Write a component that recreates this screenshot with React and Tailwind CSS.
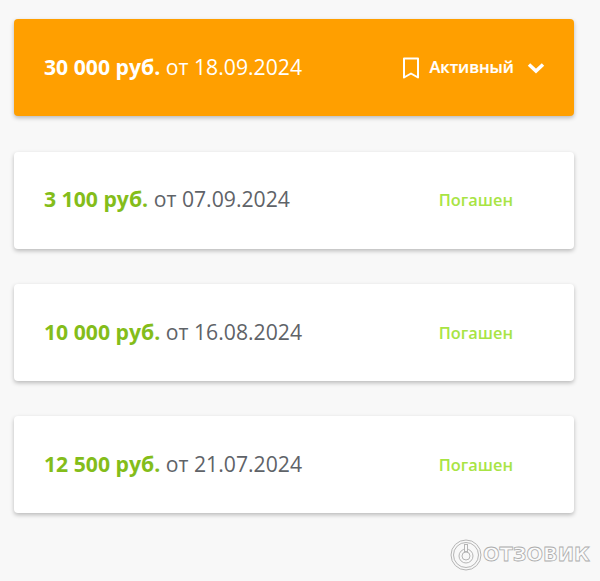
import React from "react";

const loans = [
    { amount: "3 100 руб.", date: "от 07.09.2024", statusClass: "translate-y-0" },
    { amount: "10 000 руб.", date: "от 16.08.2024", statusClass: "translate-y-[1px]" },
    { amount: "12 500 руб.", date: "от 21.07.2024", statusClass: "translate-y-[1px]" },
];

const App = () => {
    return (
        <div className="relative h-[581px] w-[600px] overflow-hidden bg-[#f8f8f8] pl-[14px] pr-[26px] pt-[19px] font-['Open_Sans',sans-serif]">
            {/* Active loan */}
            <div className="flex h-[97px] items-center rounded-[4px] bg-[#ff9f00] pl-[30px] pr-[29px] shadow-[0_2px_4px_rgba(0,0,0,0.25)]">
                <div className="flex-1 -translate-y-[1px] text-[21.2px] text-white">
                    <span className="font-bold">30 000 руб.</span> от 18.09.2024
                </div>
                <svg width="18" height="22" viewBox="0 0 18 22" fill="none" stroke="white" strokeWidth="2" className="mr-[9px]">
                    <path d="M2 1.5h14v19l-7-4-7 4z" strokeLinejoin="round" />
                </svg>
                <span className="text-[16.4px] font-semibold text-white [-webkit-text-stroke:0.2px_white]">Активный</span>
                <svg width="18" height="12" viewBox="0 0 18 12" fill="none" stroke="white" strokeWidth="3.5" className="ml-[13px]">
                    <path d="M2 2.5l7 6.5 7-6.5" />
                </svg>
            </div>

            {/* Paid loans */}
            <div className="mt-[35.5px] flex flex-col gap-[35px]">
                {loans.map((loan) => (
                    <div
                        key={loan.date}
                        className="flex h-[97.3px] items-center justify-between rounded-[4px] bg-white pl-[30px] pr-[61px] shadow-[0_2px_4px_rgba(0,0,0,0.25)]"
                    >
                        <div className="-translate-y-[1px] text-[21.2px] text-[#5f6368]">
                            <span className="font-bold text-[#84bd1a]">{loan.amount}</span> {loan.date}
                        </div>
                        <span className={`${loan.statusClass} text-[16.4px] font-semibold text-[#a8e444]`}>Погашен</span>
                    </div>
                ))}
            </div>

            {/* Watermark logo */}
            <div className="absolute left-[450px] top-[539px] flex items-center">
                <svg width="32" height="32" viewBox="0 0 32 32" fill="none" stroke="#b5b5b5" strokeWidth="1">
                    <circle cx="16" cy="16" r="15" />
                    <circle cx="16" cy="16" r="12.5" />
                    <circle cx="16" cy="17" r="7" />
                    <circle cx="16" cy="17" r="4" />
                    <rect x="14.5" y="5.5" width="3" height="7" fill="#f8f8f8" />
                </svg>
                <span className="ml-[1px] text-[19.4px] leading-none font-bold text-[#fbfbfb] [-webkit-text-stroke:0.8px_#adadad] font-['DejaVu_Sans',sans-serif]">
                    ОТЗОВИК
                </span>
            </div>
        </div>
    );
};

export default App;
